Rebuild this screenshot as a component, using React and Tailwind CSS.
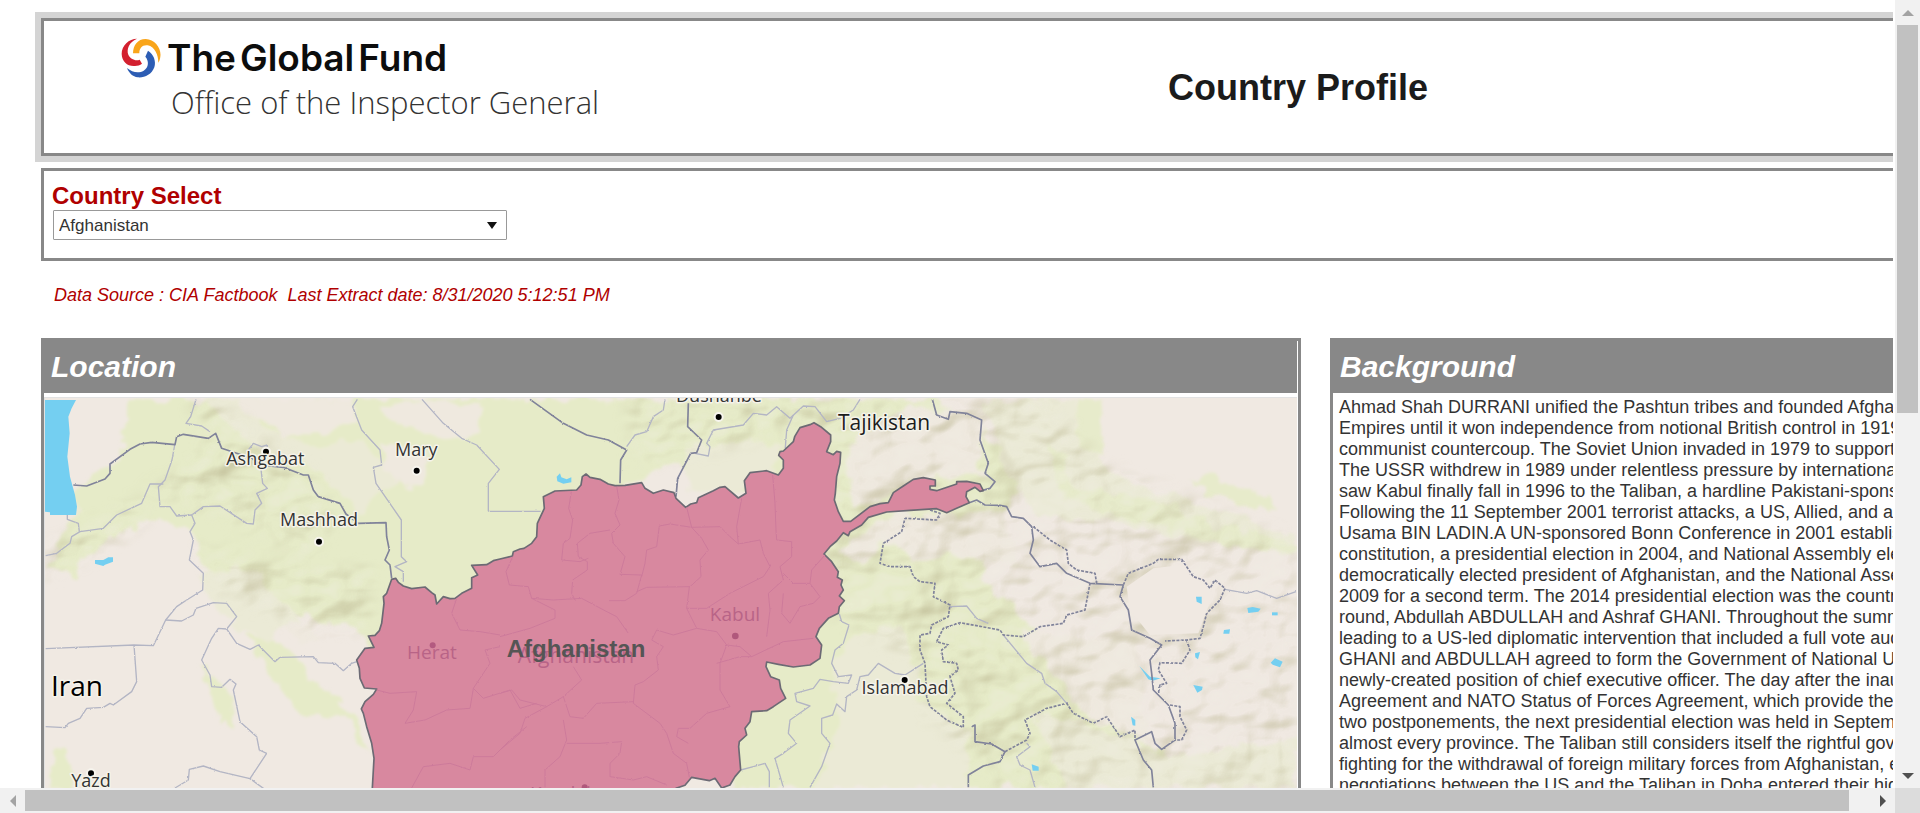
const BACKGROUND = [
  "Ahmad Shah DURRANI unified the Pashtun tribes and founded Afghanistan",
  "Empires until it won independence from notional British control in 1919.",
  "communist countercoup. The Soviet Union invaded in 1979 to support the",
  "The USSR withdrew in 1989 under relentless pressure by internationally",
  "saw Kabul finally fall in 1996 to the Taliban, a hardline Pakistani-sponsored",
  "Following the 11 September 2001 terrorist attacks, a US, Allied, and anti-",
  "Usama BIN LADIN.A UN-sponsored Bonn Conference in 2001 established",
  "constitution, a presidential election in 2004, and National Assembly elections",
  "democratically elected president of Afghanistan, and the National Assembly",
  "2009 for a second term. The 2014 presidential election was the country's",
  "round, Abdullah ABDULLAH and Ashraf GHANI. Throughout the summer",
  "leading to a US-led diplomatic intervention that included a full vote audit",
  "GHANI and ABDULLAH agreed to form the Government of National Unity",
  "newly-created position of chief executive officer. The day after the inauguration",
  "Agreement and NATO Status of Forces Agreement, which provide the",
  "two postponements, the next presidential election was held in September",
  "almost every province. The Taliban still considers itself the rightful government",
  "fighting for the withdrawal of foreign military forces from Afghanistan, establishment",
  "negotiations between the US and the Taliban in Doha entered their highest",
];

const AFGHANISTAN =
  "M-325 598L-313 595L-305 607L-290 618L-265 626L-225 621L-205 638L-195 645L-190 672L-170 650L-150 656L-135 655L-115 640L-85 625L-85 593L-67 585L-85 556L-40 554L-20 542L0 537L37 528L40 515L60 507L72 505L95 490L110 470L112 430L133 385L130 350L165 333L230 330L243 315L247 290L258 282L270 292L300 298L325 312L345 317L375 316L425 308L435 325L460 340L490 330L522 338L528 355L557 382L572 372L590 368L595 353L640 332L660 322L675 320L715 354L738 340L733 302L750 278L800 272L835 285L850 265L850 240L836 226L840 215L850 213L880 185L884 170L900 143L930 134L942 128L962 140L992 165L992 185L980 215L1000 224L1010 214L1022 217L1020 250L1010 290L1006 340L1003 360L1015 395L1030 424L1052 424L1110 380L1140 371L1165 368L1180 338L1210 318L1240 298L1270 293L1306 300L1306 318L1290 318L1290 328L1310 332L1370 312L1370 305L1400 304L1440 312L1450 332L1440 334L1425 322L1400 335L1398 350L1408 368L1370 385L1340 398L1310 386L1230 391L1160 396L1105 412L1085 435L1050 455L1045 467L1030 458L1010 483L990 500L972 522L995 545L1015 575L1012 592L1027 600L1023 615L1030 630L1018 648L1033 662L1018 680L1015 700L985 715L958 745L948 770L965 795L960 835L930 855L880 861L835 853L800 846L798 860L812 890L838 900L842 925L857 955L820 980L800 992L755 995L750 1025L735 1045L740 1065L718 1085L716 1100L722 1170L705 1190L690 1215L665 1224L645 1195L628 1202L575 1192L555 1216L530 1224L450 1270L-383 1270L-383 1224L-378 1135L-385 1090L-400 1040L-410 1000L-416 987L-405 965L-380 943L-370 927L-407 924L-420 895L-422 865L-430 840L-405 805L-378 802L-395 768L-375 766L-362 752L-355 730L-348 670L-350 650L-340 640Z";

const PROVINCES = [
  "M214 335L206 385L218 420L210 475L190 490L185 540L240 545L265 535",
  "M350 318L357 360L345 400L360 435L335 460L340 490L375 530L360 583L425 585L410 640L375 662L330 662",
  "M330 450L270 460L232 490L235 530L262 545L262 570L218 600L215 640L225 660",
  "M38 530L18 575L28 615L85 620L95 655L160 660L245 655L330 700L350 710L385 760",
  "M95 655L165 690L165 715L90 745L0 770",
  "M478 438L470 500L440 510L435 550L425 590",
  "M478 438L510 432L575 442L560 382M575 442L605 475L625 510L600 540L603 590L570 620L440 622L410 635",
  "M575 442L660 440L690 470L715 492L710 440L725 355M715 492L780 480L790 520L810 560L790 590L730 620L690 640L620 685L560 685L568 620",
  "M818 285L825 370L828 450L830 480L875 485L875 530L840 560L850 600L805 640L810 690L800 770",
  "M850 580L880 610L930 610L935 570L975 525M930 610L960 650L940 670L900 680L870 730L845 700L850 640",
  "M560 685L590 745L650 755L680 795L720 800L755 830L850 785L940 775",
  "M590 745L520 765L470 750L455 780L490 800L470 830L475 870L430 905L405 915L400 970L440 1000L480 1030L500 1060L520 1120L560 1150L568 1192",
  "M650 850L720 830L755 830M680 795L660 850L660 930L690 980L620 1000L570 1045L535 1045L530 1070L565 1090",
  "M220 860L245 900L190 950L140 980L75 1015L60 1060L0 1110",
  "M190 950L210 1010L250 1015L290 970L400 965",
  "M0 940L35 930L60 960L140 980M190 1020L200 1080L180 1130L135 1170L135 1222",
  "M200 1090L300 1090L365 1085L360 1120L330 1150L330 1190L400 1200L440 1190L500 1215",
  "M-130 655L-145 700L-120 750L-60 755L0 765M-370 930L-330 940L-250 935L-260 990L-285 1030L-225 1020L-160 990L-90 985L-80 925L-30 850L-45 810L0 800",
  "M-80 925L-50 955L30 930L60 985L110 970M-265 1224L-230 1160L-150 1150L-90 1170L-80 1130L-20 1130L30 1080L80 1040",
];

const ADMIN_LINES = [
  "M-912 58L-928 110L-942 130L-895 138L-870 155",
  "M-976 195L-984 240L-1005 300L-1025 320L-1020 380L-990 380L-970 408L-925 405L-890 380L-840 378L-760 430L-740 432L-735 390L-715 370L-730 340L-698 325L-712 310L-718 260",
  "M-1010 312L-1050 312L-1075 370L-1150 405L-1190 445L-1260 455L-1285 470L-1290 490L-1330 520L-1363 527",
  "M-1298 405L-1298 418L-1265 430L-1262 455",
  "M-925 405L-915 430L-930 455L-920 480L-932 540L-890 580L-892 630L-940 660L-970 680L-1003 720L-1040 797L-1098 795L-1363 806",
  "M-1098 795L-1090 905L-1105 935L-1160 975L-1170 970L-1190 982L-1240 985L-1260 1015L-1295 1030L-1305 1043L-1363 1040",
  "M-1003 720L-955 723L-920 705L-912 685L-860 668L-820 670L-790 710L-820 747L-845 745L-865 775L-895 840L-870 885L-865 920L-835 922L-810 898L-792 912L-800 930L-780 1025L-730 1070L-722 1110L-700 1120L-750 1196L-700 1232",
  "M-750 1196L-840 1175L-890 1158L-932 1168L-935 1200L-975 1224",
  "M-820 747L-790 790L-750 808L-725 795L-675 845L-660 832L-560 830L-545 848L-495 850L-470 872L-445 850L-430 845",
  "M-428 58L-442 80L-415 150L-360 210L-355 255L-380 262L-372 310L-296 420L-296 530L-280 545L-315 560L-290 575L-290 605",
  "M-35 394L122 394",
  "M-755 210L-740 190L-715 200L-698 195L-700 215",
  "M495 58L490 90L460 110L440 155L405 165L380 200",
  "M1080 58L1060 90L1020 115L980 125L945 80L910 78L870 115L830 80L800 105L760 100L730 135L640 150L620 190L630 200L625 228L585 220",
  "M880 105L860 150L855 215",
  "M-234 58L-170 130L-115 175L-70 195L-2 268L-35 310L-35 394",
  "M1018 702L1025 725L1047 735L1030 790L1005 810L995 850L1015 890L1055 885L1045 910L1000 905L960 898L940 925L885 940L890 965L930 978L870 1020L865 1060L890 1090L850 1120L825 1135L835 1170L850 1222",
  "M1270 850L1215 885L1185 880L1135 850L1105 885L1080 890L1070 930L1040 950L1035 995L1010 972L998 1005L965 1015L965 1060L990 1090L965 1160L930 1222",
  "M722 1170L760 1160L795 1150L808 1175L808 1222",
  "M1350 680L1400 678L1430 715L1465 730M1510 765L1580 850L1625 880L1635 910L1670 935L1700 970",
  "M2175 628L2240 640L2270 632L2330 655L2388 635M1580 1090L1590 1100L1550 1130L1560 1155L1590 1170L1605 1222",
];

const BORDER_LINES = [
  "M-1280 315L-1240 318L-1185 297L-1170 280L-1170 252L-1110 208L-1080 192L-1045 187L-975 194L-970 170L-950 163L-875 175L-853 160L-835 205L-790 220L-745 235L-720 255L-650 262L-590 285L-575 285L-560 330L-545 350L-480 370L-462 402L-425 430L-342 428L-340 470L-332 510L-345 540L-330 555L-325 595",
  "M90 58L190 130L260 165L325 180L380 210L362 240L360 310",
  "M565 70L563 140L605 180L590 218L572 220L533 295L528 350",
  "M1297 58L1310 105L1345 118L1350 95L1400 100L1445 120L1440 180L1465 250L1455 280L1485 305L1470 325L1445 332",
  "M1408 368L1430 360L1455 375L1500 376L1520 380L1535 410L1570 415L1595 440L1600 480L1590 520L1620 560L1670 550L1700 580L1770 610L1870 615",
  "M1870 615L1860 650L1885 690L1895 750L1950 775L1985 795L1950 840L1955 880L1960 930L2005 975L2025 1030L2025 1080L1985 1108L1965 1090L1955 1055L1905 1080L1930 1140L1955 1170L1960 1222",
  "M1415 1040L1425 1035L1425 1085L1475 1092L1515 1115L1500 1145L1450 1158L1405 1185L1405 1222",
];

const DISPUTED_LINES = [
  "M1290 390L1320 400L1310 420L1215 415L1205 455L1150 490L1140 550L1170 560L1230 560L1240 590L1260 605L1305 610L1300 650L1350 675L1345 710L1295 735L1290 760L1260 765L1260 810L1275 850L1280 950L1290 980L1340 1020L1390 1042",
  "M1390 1042L1390 1010L1340 970L1365 940L1350 890L1375 870L1370 850L1330 845L1325 810L1345 795L1310 785L1330 745L1380 728L1500 750L1510 765L1570 770L1620 740L1690 730L1700 705L1755 690L1770 610",
  "M1515 1115L1580 1080L1590 1060L1575 1020L1640 985L1700 970L1720 1000L1780 1030L1820 1010L1860 1070L1905 1050L1905 1080",
  "M1600 440L1650 480L1700 510L1705 550L1730 570L1785 580L1790 610",
  "M1870 615L1885 580L1960 550L1975 538L2045 538L2080 590L2110 600L2130 625L2145 600L2175 625L2160 660L2120 700L2110 740L2100 775L2060 780L1995 783",
  "M2060 780L2070 810L2045 850L1980 848L1975 870L2000 910L1980 915L1975 940M2010 975L2040 980L2040 1010L2060 1050L2045 1080L2025 1080",
];

const LAKES = [
  "M-1365 60L-1272 60L-1285 85L-1295 110L-1291 160L-1298 230L-1290 290L-1275 345L-1269 380L-1272 405L-1350 405L-1350 397L-1365 395Z",
  "M-1215 540L-1190 540L-1175 532L-1161 532L-1161 545L-1185 554L-1190 558L-1215 551Z",
  "M170 290L180 280L184 292L200 298L214 292L214 307L190 311L172 304Z",
  "M2088 650L2105 650L2105 672L2090 665Z",
  "M2242 684L2258 681L2282 686L2275 695L2245 699Z",
  "M2316 697L2333 697L2333 706L2316 706Z",
  "M2172 750L2190 748L2188 761L2170 761Z",
  "M2085 820L2100 816L2094 838L2086 832Z",
  "M2312 848L2325 835L2348 845L2340 862L2318 854Z",
  "M2080 915L2108 920L2106 930L2092 938Z",
  "M1893 1010L1906 1020L1906 1037L1898 1036Z",
  "M1595 1153L1616 1160L1616 1172L1598 1172Z",
  "M1918 858L1950 890L1982 895L1958 902L1945 898Z",
];

const GREEN_AREAS = [
  "M-1365 560L-1300 440L-1270 400L-1275 330L-1230 290L-1140 240L-1110 58L1300 58L1500 200L1560 340L1470 420L1450 600L1550 700L1680 850L1800 1000L1960 1100L2200 1224L700 1224L700 700L900 400L500 250L-200 700L-330 900L-420 740L-560 720L-740 650L-890 560L-930 440L-1080 420L-1200 500L-1260 530L-1260 590Z",
  "M-770 760L-640 790L-560 900L-480 960L-400 1060L-390 1120L-460 1020L-600 1000L-690 880Z",
  "M-900 850L-820 940L-800 1050L-850 1000Z",
  "M-1340 1100L-1290 1120L-1290 1224L-1345 1224Z",
];

const SAND_AREAS = [
  "M-780 58L-440 58L-430 130L-560 160L-640 170L-680 130L-760 110Z",
  "M-360 80L-230 60L-60 80L-70 160L-160 190L-250 150L-330 130Z",
  "M-350 190L-220 210L-220 320L-280 330L-350 260Z",
  "M-640 740L-560 720L-540 780L-590 800Z",
  "M1050 180L1240 70L1440 110L1450 290L1300 290L1180 330L1060 380L1040 300Z",
  "M1180 400L1500 400L1560 560L1350 520L1240 540L1150 480L1080 560L1020 500Z",
  "M1550 760L1900 780L1950 1100L1750 1000L1640 860Z",
];

const PALE_AREAS = [
  "M1060 760L1200 740L1240 820L1250 950L1400 1060L1400 1224L940 1224L1010 1080L1000 840Z",
  "M560 200L850 180L830 270L720 330L560 340Z",
  "M-900 58L-760 58L-720 130L-560 200L-420 180L-300 300L-420 400L-560 260L-720 220Z",
  "M-900 580L-740 560L-600 720L-700 780L-860 700Z",
  "M1450 58L1720 58L1800 260L1960 330L2250 420L2388 470L2388 520L2200 500L1800 420L1600 400L1500 220Z",
  "M1600 1000L1800 1040L2000 1130L2388 1080L2388 1224L1700 1224Z",
];

const RELIEF_AREAS = [
  "M-930 58L-860 58L-700 180L-560 280L-500 420L-560 540L-800 420L-1060 330L-920 240L-880 170Z",
  "M-1365 500L-1200 420L-1060 340L-1080 440L-1200 520L-1365 600Z",
  "M-900 500L-560 560L-380 560L-400 760L-560 760L-860 620Z",
  "M380 58L1650 58L1800 250L2388 480L2388 1224L1500 1224L1280 1000L1260 850L1000 700L980 500L1000 350L860 150L560 230L400 250Z",
];

const CITIES = [
  { name: "Ashgabat", x: -704, y: 256, dx: -702, dy: 215 },
  { name: "Mary", x: -251, y: 227, dx: -250, dy: 272 },
  { name: "Mashhad", x: -543, y: 438, dx: -543, dy: 485 },
  { name: "Yazd", x: -1227, y: 1220, dx: -1227, dy: 1180 },
  { name: "Dushanbe", x: 657, y: 66, dx: 656, dy: 111 },
  { name: "Islamabad", x: 1215, y: 941, dx: 1214, dy: 900 },
];

function Paths({ items }) {
  return items.map((d) => <path key={d} d={d} />);
}

function LocationMap() {
  return (
    <svg viewBox="45 398 1252 560" className="block w-full" role="img" aria-label="Map of Afghanistan">
      <defs>
        <filter id="shade" x="0" y="0" width="1" height="1" colorInterpolationFilters="sRGB">
          <feTurbulence type="fractalNoise" baseFrequency="0.016 0.022" numOctaves="3" seed="11" />
          <feDiffuseLighting surfaceScale="14" lightingColor="#fff">
            <feDistantLight azimuth="225" elevation="55" />
          </feDiffuseLighting>
          <feColorMatrix values="0 0 0 0 0.72  0 0 0 0 0.70  0 0 0 0 0.55  -0.9 0 0 0 0.74" />
        </filter>
        <filter id="light" x="0" y="0" width="1" height="1" colorInterpolationFilters="sRGB">
          <feTurbulence type="fractalNoise" baseFrequency="0.016 0.022" numOctaves="3" seed="11" />
          <feDiffuseLighting surfaceScale="14" lightingColor="#fff">
            <feDistantLight azimuth="225" elevation="55" />
          </feDiffuseLighting>
          <feColorMatrix values="0 0 0 0 0.95  0 0 0 0 0.94  0 0 0 0 0.90  2 0 0 0 -1.7" />
        </filter>
        <filter id="soft" x="-0.1" y="-0.1" width="1.2" height="1.2">
          <feGaussianBlur stdDeviation="22" />
        </filter>
        <filter id="patch" x="-0.05" y="-0.05" width="1.1" height="1.1">
          <feTurbulence type="fractalNoise" baseFrequency="0.018" numOctaves="3" seed="4" />
          <feDisplacementMap in="SourceGraphic" scale="60" xChannelSelector="R" yChannelSelector="G" />
          <feGaussianBlur stdDeviation="4" />
        </filter>
        <filter id="rough" x="-0.05" y="-0.05" width="1.1" height="1.1">
          <feTurbulence type="fractalNoise" baseFrequency="0.12" numOctaves="2" seed="7" />
          <feDisplacementMap in="SourceGraphic" scale="6" xChannelSelector="R" yChannelSelector="G" />
        </filter>
        <mask id="relief" maskUnits="userSpaceOnUse" x="45" y="398" width="1252" height="560">
          <g transform="translate(500 380) scale(0.33333)" fill="#fff" filter="url(#soft)">
            <Paths items={RELIEF_AREAS} />
          </g>
        </mask>
      </defs>

      <rect x="45" y="398" width="1252" height="560" fill="#f0e9e2" />
      <g transform="translate(500 380) scale(0.33333)">
        <g filter="url(#patch)">
          <g fill="#e6ebc8">
            <Paths items={GREEN_AREAS} />
          </g>
          <g fill="#ebead6">
            <Paths items={PALE_AREAS} />
          </g>
          <g fill="#efe9df">
            <Paths items={SAND_AREAS} />
          </g>
        </g>
        <g fill="#e7ebcb" filter="url(#patch)">
          <path d="M1640 180L1700 240L1720 320L1860 350L1960 360L2150 440L2388 480L2388 510L2200 500L2000 440L1800 400L1680 350Z" />
          <path d="M1730 60L1820 60L1800 220L1730 200Z" />
          <path d="M2060 300L2130 280L2200 320L2330 350L2330 390L2200 370Z" />
        </g>
      </g>
      <g mask="url(#relief)">
        <rect x="45" y="398" width="1252" height="560" filter="url(#shade)" />
        <rect x="45" y="398" width="1252" height="560" filter="url(#light)" />
      </g>
      <g transform="translate(500 380) scale(0.33333)" strokeLinejoin="round">
        <path d="M1880 620L1960 565L2045 555L2140 640L2095 760L1950 765L1890 690Z" fill="#f0e9e2" />
        <g fill="#74cff1">
          <Paths items={LAKES} />
        </g>
        <g fill="none" filter="url(#rough)">
          <g stroke="#b3b5c4" strokeWidth="4">
            <Paths items={ADMIN_LINES} />
          </g>
          <g stroke="#80839a" strokeWidth="5">
            <Paths items={BORDER_LINES} />
          </g>
          <g stroke="#80839a" strokeWidth="5" strokeDasharray="9 4">
            <Paths items={DISPUTED_LINES} />
          </g>
        </g>
        <path d={AFGHANISTAN} fill="#d8889f" stroke="#6c6a74" strokeWidth="5" />
        <g fill="none" stroke="#cd7a9b" strokeWidth="3" filter="url(#rough)">
          <Paths items={PROVINCES} />
        </g>
        <circle cx="-202" cy="796" r="9" fill="#b35a80" />
        <circle cx="706" cy="768" r="10" fill="#b0587c" />
        <circle cx="254" cy="1222" r="9" fill="#b0587c" />
        {CITIES.map((c) => (
          <circle key={c.name} cx={c.dx} cy={c.dy} r="12" fill="#000" stroke="#f7f5ee" strokeWidth="6" />
        ))}
      </g>

      <g fontFamily="'Open Sans', 'Noto Sans', sans-serif" textAnchor="middle">
        <g fill="#b86487" fontSize="19">
          <text x="432" y="659">Herat</text>
          <text x="735" y="621">Kabul</text>
          <text x="576" y="663" fontSize="21">Afghanistan</text>
          <text x="573" y="800">Kandahar</text>
        </g>
        <g fill="#333" fontSize="18" stroke="#f5f3ea" strokeWidth="3" paintOrder="stroke" strokeLinejoin="round">
          {CITIES.map((c) => (
            <text key={c.name} x={500 + c.x / 3} y={380 + c.y / 3}>
              {c.name}
            </text>
          ))}
          <text x="884" y="430" fontSize="21" fontWeight="500" fill="#1c1c1c">Tajikistan</text>
          <text x="77" y="696" fontSize="28" fontWeight="500" fill="#000">Iran</text>
        </g>
      </g>
      <text x="576" y="657" textAnchor="middle" fontFamily="'Liberation Sans', Arial, sans-serif" fontSize="24" fontWeight="700" fill="#555">
        Afghanistan
      </text>
    </svg>
  );
}

function LogoMark() {
  return (
    <svg viewBox="0 0 120 120" className="size-10 shrink-0" aria-hidden="true">
      <path d="M48 2C24 2 2 22 2 48C3 72 20 86 42 84C50 83 57 82 63 77L56 65C42 70 28 62 22 50C16 34 24 12 48 2Z" fill="#d3202f" />
      <path d="M36 46C36 22 50 3 74 3C102 4 122 32 118 56C117 64 115 69 112 74C112 52 102 26 80 22C64 20 55 30 55 46Z" fill="#f9a51a" />
      <path d="M81 38C98 48 106 70 100 88C92 110 70 120 50 118C36 116 24 106 18 90C34 104 54 106 68 98C84 88 84 68 73 56Z" fill="#2d5db4" />
    </svg>
  );
}

function PanelTitle({ children }) {
  return (
    <h2 className="flex h-[52px] items-center bg-[#888] pl-[7px] text-3xl font-bold italic text-white">{children}</h2>
  );
}

function ArrowButton({ label, points, color }) {
  return (
    <button type="button" aria-label={label} className="flex size-[25px] shrink-0 items-center justify-center">
      <svg viewBox="0 0 12 12" className="size-3" aria-hidden="true">
        <polygon points={points} fill={color} />
      </svg>
    </button>
  );
}

export default function App() {
  return (
    <div className="grid h-screen grid-cols-[minmax(0,1fr)_25px] grid-rows-[minmax(0,1fr)_25px] bg-white font-['Liberation_Sans',Arial,sans-serif] text-[#1b1b1b]">
      <main className="mr-0.5 overflow-hidden">
        <div className="min-w-[2555px] pl-[35px] pt-3">
          <header className="border-6 border-[#d4d4d4]">
            <div className="relative flex h-[138px] items-start border-3 border-[#888] pl-[77px] pt-[17px]">
              <div className="flex gap-1.5">
                <LogoMark />
                <div className="flex flex-col">
                  <div className="flex h-10 items-center gap-1 font-[Inter,sans-serif] text-[37px] font-semibold text-[#0c0d0d]">
                    <span>The</span>
                    <span>Global</span>
                    <span>Fund</span>
                  </div>
                  <div className="mt-1 pl-1 font-['Open_Sans',sans-serif] text-[31px] font-light leading-10 text-[#333]">
                    Office of the Inspector General
                  </div>
                </div>
              </div>
              <h1 className="absolute inset-x-0 top-[47px] pl-1.5 text-center text-4xl font-bold leading-10">Country Profile</h1>
            </div>
          </header>

          <div className="pl-1.5">
            <section className="mt-1.5 flex h-[93px] flex-col items-start border-3 border-[#888] pl-2 pt-[11px]">
              <label htmlFor="country" className="text-2xl font-bold leading-7 text-[#b00000]">
                Country Select
              </label>
              <div className="relative ml-px w-[454px]">
                <select
                  id="country"
                  className="h-[30px] w-full appearance-none rounded-[1px] border border-[#999] bg-white pl-[5px] pt-px text-[17px] text-[#333]"
                  defaultValue="Afghanistan"
                >
                  <option>Afghanistan</option>
                </select>
                <svg viewBox="0 0 10 7" className="pointer-events-none absolute right-2.5 top-3 h-[7px] w-2.5" aria-hidden="true">
                  <polygon points="0,0 10,0 5,7" fill="#111" />
                </svg>
              </div>
            </section>

            <p className="mt-[22px] whitespace-pre pl-[13px] text-lg leading-6 italic text-[#b00000]">
              {"Data Source : CIA Factbook  Last Extract date: 8/31/2020 5:12:51 PM"}
            </p>

            <div className="mt-[31px] grid grid-cols-[36fr_35fr] gap-[29px]">
              <section className="border-3 border-[#888] bg-white">
                <div className="mr-px">
                  <PanelTitle>Location</PanelTitle>
                  <div className="mt-1 border-l border-t border-[#e2e2e2]">
                    <LocationMap />
                  </div>
                </div>
              </section>
              <section className="border-3 border-[#888] bg-white">
                <PanelTitle>Background</PanelTitle>
                <div className="mt-1 whitespace-nowrap pl-1.5 text-lg leading-[21px] text-[#333]">
                  {BACKGROUND.map((line) => (
                    <p key={line}>{line}</p>
                  ))}
                </div>
              </section>
            </div>
          </div>
        </div>
      </main>

      <div className="flex flex-col items-center bg-[#f1f1f1]">
        <ArrowButton label="Scroll up" points="6,3 12,9 0,9" color="#a3a3a3" />
        <div className="w-full flex-1 px-0.5">
          <div className="h-[388px] bg-[#c1c1c1]" />
        </div>
        <ArrowButton label="Scroll down" points="0,3 12,3 6,9" color="#505050" />
      </div>
      <div className="flex items-center bg-[#f1f1f1]">
        <ArrowButton label="Scroll left" points="9,0 9,12 3,6" color="#a3a3a3" />
        <div className="flex h-full flex-1 py-0.5 pr-[21px]">
          <div className="w-full bg-[#c1c1c1]" />
        </div>
        <ArrowButton label="Scroll right" points="3,0 9,6 3,12" color="#505050" />
      </div>
      <div className="bg-[#dcdcdc]" />
    </div>
  );
}
